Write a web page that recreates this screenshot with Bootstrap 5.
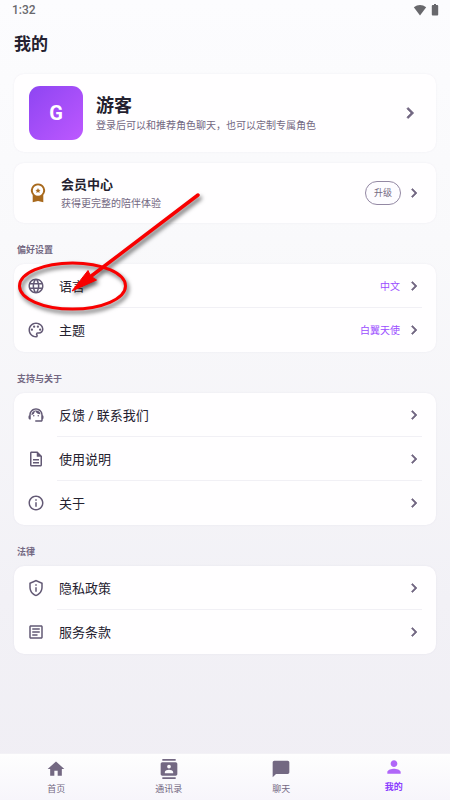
<!DOCTYPE html>
<html lang="zh-CN">
<head>
<meta charset="utf-8">
<meta name="viewport" content="width=device-width, initial-scale=1">
<title>我的</title>
<link href="https://cdn.jsdelivr.net/npm/bootstrap@5.3.0/dist/css/bootstrap.min.css" rel="stylesheet">
<style>
:root { --ink: #24212f; --muted: #736882; --violet: #9b4dff; }
body { font-family: Roboto, "Noto Sans CJK SC", sans-serif; color: var(--ink); font-size: 13px; line-height: 20px;
  background: linear-gradient(#fcfcfe, #f9f9fb 30%, #f2f1f6 75%, #f0eef4) fixed; }
svg { display: block; flex: none; fill: currentColor; }
a { color: inherit; text-decoration: none; }
.status-bar { height: 20px; padding: 0 11px 0 12px; font-size: 12px; font-weight: 500; color: #68686c; }
.page-title { font-size: 17px; line-height: 24px; font-weight: 700; margin: 12px 0 18px; }
main { padding: 0 14px; }
.panel { background: #fffeff; border-radius: 10px; box-shadow: 0 0 2px rgba(90, 70, 130, .08); }
.profile { height: 78px; padding: 0 15px; }
.avatar { width: 54px; height: 54px; border-radius: 11px; font-size: 20px; font-weight: 700; color: #fff; background: linear-gradient(135deg, #8e45f2, #bd58ff); }
.profile-text { margin-left: 13px; padding-top: 3px; }
.user-name { font-size: 18px; line-height: 22px; font-weight: 700; }
.hint { font-size: 10px; line-height: 18px; color: var(--muted); }
.member { height: 60px; padding: 0 13px 0 15px; margin-top: 11px; }
.member-text { margin-left: 14px; padding-top: 2px; }
.member-name { font-size: 13px; font-weight: 700; line-height: 20px; }
.medal { color: #a8691d; }
.upgrade { font-size: 9px; line-height: 22px; padding: 0 8px; border: 1px solid #9388a3; color: var(--muted); background: #fdfcff; }
.section-label { font-size: 9px; line-height: 13px; font-weight: 700; color: var(--muted); margin: 21px 0 7px 3px; }
.setting { height: 44px; padding: 0 13px; }
.setting span { padding-top: 1px; }
.setting-icon { width: 18px; color: #635975; margin-right: 14px; }
.line { border-bottom: 1px solid #f1f0f5; margin: -1px 14px 0 43px; }
.value { font-size: 10px; color: var(--violet); margin-right: 5px; }
.chev { color: #716681; }
.tabs { height: 47px; background: linear-gradient(#fefefe, #f7f5fb); border-top: 1px solid #f3f2f6; }
.tabs a { font-size: 9px; line-height: 13px; color: var(--muted); padding-top: 5px; }
.tabs a svg { margin-bottom: 4px; }
.tabs a.current { color: #8b3dff; font-weight: 700; padding-top: 3px; }
.tabs a.current svg { color: #b066f8; }
.callout-mark { left: -10px; top: -78px; pointer-events: none; z-index: 2; filter: drop-shadow(2px 3px 2px rgba(0, 0, 0, .6)); }
</style>
<script src="https://cdn.jsdelivr.net/npm/bootstrap@5.3.0/dist/js/bootstrap.bundle.min.js"></script>
</head>
<body class="d-flex flex-column min-vh-100">
<svg class="d-none" aria-hidden="true"><symbol id="chev" viewBox="0 0 24 24"><path d="M10 6 8.600 7.400 13.200 12l-4.600 4.600L10 18l6-6z" stroke="currentColor" stroke-width=".8"/></symbol></svg>

<div class="status-bar d-flex align-items-center justify-content-between">
  <span>1:32</span>
  <span class="d-flex gap-1 align-items-center">
    <svg width="14" height="12" viewBox="0 0 14 12"><path d="M7 11.500.8 3.200Q7-1.200 13.200 3.200Z"/></svg>
    <svg width="8" height="12" viewBox="0 0 8 12"><path d="M3 0h2v1h1.300q.9 0 .9.900v8.700q0 .9-.9.900H1.700q-.9 0-.9-.9V1.900q0-.9.900-.9H3z"/></svg>
  </span>
</div>

<main class="flex-grow-1">
  <h1 class="page-title">我的</h1>

  <a href="#profile" class="panel profile d-flex align-items-center">
    <span class="avatar d-flex align-items-center justify-content-center">G</span>
    <span class="profile-text flex-grow-1 d-flex flex-column">
      <span class="user-name">游客</span>
      <span class="hint">登录后可以和推荐角色聊天，也可以定制专属角色</span>
    </span>
    <svg class="chev" width="22" height="22"><use href="#chev"/></svg>
  </a>

  <div class="panel member d-flex align-items-center">
    <svg class="medal" width="18" height="20" viewBox="0 0 18 20"><path fill-rule="evenodd" d="M9 .5a7 7 0 0 1 5.300 11.600v7.100L9 18l-5.300 1.200v-7.100A7 7 0 0 1 9 .5Zm0 1.800a5.200 5.200 0 1 0 0 10.400A5.200 5.200 0 0 0 9 2.300Z"/><path d="m9 5 .8 1.700 1.800.2-1.300 1.200.3 1.800L9 9l-1.600.9.3-1.800-1.300-1.200 1.800-.2Z"/></svg>
    <div class="member-text flex-grow-1">
      <div class="member-name">会员中心</div>
      <div class="hint">获得更完整的陪伴体验</div>
    </div>
    <button type="button" class="upgrade rounded-pill">升级</button>
    <svg class="chev ms-1" width="18" height="18"><use href="#chev"/></svg>
  </div>

  <h2 class="section-label">偏好设置</h2>
  <div class="panel position-relative">
    <a href="#language" class="setting d-flex align-items-center">
      <svg class="setting-icon" height="18" viewBox="0 0 24 24"><path d="M11.990 2C6.470 2 2 6.480 2 12s4.470 10 9.990 10C17.520 22 22 17.520 22 12S17.520 2 11.990 2zm6.930 6h-2.950c-.32-1.250-.78-2.450-1.380-3.560 1.840.63 3.370 1.910 4.330 3.560zM12 4.040c.83 1.200 1.480 2.530 1.910 3.960h-3.820c.43-1.430 1.080-2.760 1.910-3.960zM4.260 14C4.100 13.360 4 12.690 4 12s.1-1.360.26-2h3.380c-.08.66-.14 1.320-.14 2s.06 1.340.14 2H4.260zm.82 2h2.950c.32 1.250.78 2.450 1.380 3.560-1.840-.63-3.370-1.900-4.330-3.560zm2.950-8H5.080c.96-1.660 2.490-2.930 4.330-3.560C8.810 5.550 8.350 6.750 8.030 8zM12 19.960c-.83-1.200-1.480-2.530-1.910-3.960h3.820c-.43 1.430-1.080 2.760-1.910 3.960zM14.340 14H9.660c-.09-.66-.16-1.320-.16-2s.07-1.350.16-2h4.680c.09.65.16 1.320.16 2s-.07 1.340-.16 2zm.25 5.560c.6-1.110 1.060-2.310 1.380-3.560h2.950c-.96 1.650-2.490 2.930-4.330 3.560zM16.360 14c.08-.66.14-1.320.14-2s-.06-1.340-.14-2h3.380c.16.64.26 1.310.26 2s-.1 1.360-.26 2h-3.380z"/></svg>
      <span class="flex-grow-1">语言</span><span class="value">中文</span><svg class="chev" width="18" height="18"><use href="#chev"/></svg>
    </a>
    <div class="line"></div>
    <a href="#theme" class="setting d-flex align-items-center">
      <svg class="setting-icon" height="18" viewBox="0 0 24 24"><path d="M12 22C6.490 22 2 17.510 2 12S6.490 2 12 2s10 4.040 10 9c0 3.310-2.690 6-6 6h-1.770c-.28 0-.5.22-.5.5 0 .12.050.23.130.33.410.47.640 1.060.640 1.670A2.500 2.500 0 0 1 12 22zm0-18c-4.410 0-8 3.590-8 8s3.590 8 8 8c.28 0 .5-.22.5-.5a.54.54 0 0 0-.14-.35c-.41-.46-.63-1.050-.63-1.650a2.500 2.500 0 0 1 2.500-2.500H16c2.210 0 4-1.790 4-4 0-3.860-3.590-7-8-7z"/><circle cx="6.500" cy="11.500" r="1.500"/><circle cx="9.500" cy="7.500" r="1.500"/><circle cx="14.500" cy="7.500" r="1.500"/><circle cx="17.500" cy="11.500" r="1.500"/></svg>
      <span class="flex-grow-1">主题</span><span class="value">白翼天使</span><svg class="chev" width="18" height="18"><use href="#chev"/></svg>
    </a>
    <svg class="callout-mark position-absolute" width="200" height="130" viewBox="4 186 200 130" aria-hidden="true"><ellipse cx="72.500" cy="286" rx="53" ry="23" fill="none" stroke="#f80000" stroke-width="3"/><path d="M198 195 90 277" stroke="#f80000" stroke-width="3.500" stroke-linecap="round"/><path d="M72 291 88 270.500 90.500 276 96.500 280Z" fill="#f80000" stroke="#f80000"/></svg>
  </div>

  <h2 class="section-label">支持与关于</h2>
  <div class="panel">
    <a href="#feedback" class="setting d-flex align-items-center">
      <svg class="setting-icon" height="18" viewBox="0 0 24 24"><path d="M21 12.220C21 6.730 16.740 3 12 3c-4.690 0-9 3.650-9 9.280-.6.340-1 .980-1 1.720v2c0 1.100.9 2 2 2h1v-6.100c0-3.870 3.130-7 7-7s7 3.130 7 7V19h-8v2h8c1.100 0 2-.9 2-2v-1.220c.59-.31 1-.92 1-1.640v-2.300c0-.7-.41-1.310-1-1.620z"/><circle cx="9" cy="13" r="1"/><circle cx="15" cy="13" r="1"/><path d="M18 11.030A6.040 6.040 0 0 0 12.050 6c-3.030 0-6.290 2.510-6.030 6.450a8.075 8.075 0 0 0 4.860-5.890c1.310 2.630 4 4.440 7.120 4.470z"/></svg>
      <span class="flex-grow-1">反馈 / 联系我们</span><svg class="chev" width="18" height="18"><use href="#chev"/></svg>
    </a>
    <div class="line"></div>
    <a href="#guide" class="setting d-flex align-items-center">
      <svg class="setting-icon" height="18" viewBox="0 0 24 24"><path d="M8 16h8v2H8zm0-4h8v2H8zm6-10H6c-1.100 0-2 .9-2 2v16c0 1.100.89 2 1.990 2H18c1.100 0 2-.9 2-2V8l-6-6zm4 18H6V4h7v5h5v11z"/></svg>
      <span class="flex-grow-1">使用说明</span><svg class="chev" width="18" height="18"><use href="#chev"/></svg>
    </a>
    <div class="line"></div>
    <a href="#about" class="setting d-flex align-items-center">
      <svg class="setting-icon" height="18" viewBox="0 0 24 24"><path d="M11 7h2v2h-2zm0 4h2v6h-2zm1-9C6.480 2 2 6.480 2 12s4.480 10 10 10 10-4.480 10-10S17.520 2 12 2zm0 18c-4.410 0-8-3.590-8-8s3.590-8 8-8 8 3.590 8 8-3.590 8-8 8z"/></svg>
      <span class="flex-grow-1">关于</span><svg class="chev" width="18" height="18"><use href="#chev"/></svg>
    </a>
  </div>

  <h2 class="section-label">法律</h2>
  <div class="panel">
    <a href="#privacy" class="setting d-flex align-items-center">
      <svg class="setting-icon" height="18" viewBox="0 0 24 24"><path d="M12 3.190l7 3.110V11c0 4.520-2.980 8.690-7 9.930-4.020-1.240-7-5.410-7-9.930V6.300l7-3.110M12 1 3 5v6c0 5.550 3.840 10.740 9 12 5.160-1.260 9-6.450 9-12V5l-9-4zm-1 6h2v2h-2V7zm0 4h2v6h-2v-6z"/></svg>
      <span class="flex-grow-1">隐私政策</span><svg class="chev" width="18" height="18"><use href="#chev"/></svg>
    </a>
    <div class="line"></div>
    <a href="#terms" class="setting d-flex align-items-center">
      <svg class="setting-icon" height="18" viewBox="0 0 24 24"><path d="M19 5v14H5V5h14m0-2H5c-1.100 0-2 .9-2 2v14c0 1.100.9 2 2 2h14c1.100 0 2-.9 2-2V5c0-1.100-.9-2-2-2zm-5 14H7v-2h7v2zm3-4H7v-2h10v2zm0-4H7V7h10v2z"/></svg>
      <span class="flex-grow-1">服务条款</span><svg class="chev" width="18" height="18"><use href="#chev"/></svg>
    </a>
  </div>
</main>

<nav class="tabs d-flex sticky-bottom" aria-label="主导航">
  <a href="#home" class="flex-fill w-25 d-flex flex-column align-items-center"><svg width="20" height="20" viewBox="0 0 24 24"><path d="M10 20v-6h4v6h5v-8h3L12 3 2 12h3v8z"/></svg>首页</a>
  <a href="#contacts" class="flex-fill w-25 d-flex flex-column align-items-center"><svg width="20" height="20" viewBox="0 0 24 24"><path d="M20 0H4v2h16V0zM4 24h16v-2H4v2zM20 4H4c-1.100 0-2 .9-2 2v12c0 1.100.9 2 2 2h16c1.100 0 2-.9 2-2V6c0-1.100-.9-2-2-2zm-8 2.750a2.250 2.250 0 1 1 0 4.500 2.250 2.250 0 0 1 0-4.500zM17 17H7v-1.500c0-1.670 3.330-2.500 5-2.500s5 .83 5 2.500V17z"/></svg>通讯录</a>
  <a href="#chat" class="flex-fill w-25 d-flex flex-column align-items-center"><svg width="20" height="20" viewBox="0 0 24 24"><path d="M20 2H4c-1.100 0-2 .9-2 2v18l4-4h14c1.100 0 2-.9 2-2V4c0-1.100-.9-2-2-2z"/></svg>聊天</a>
  <a href="#me" aria-current="page" class="current flex-fill w-25 d-flex flex-column align-items-center"><svg width="20" height="20" viewBox="0 0 24 24"><path d="M12 12c2.210 0 4-1.790 4-4s-1.790-4-4-4-4 1.790-4 4 1.790 4 4 4zm0 2c-2.670 0-8 1.340-8 4v2h16v-2c0-2.660-5.330-4-8-4z"/></svg>我的</a>
</nav>
</body>
</html>
